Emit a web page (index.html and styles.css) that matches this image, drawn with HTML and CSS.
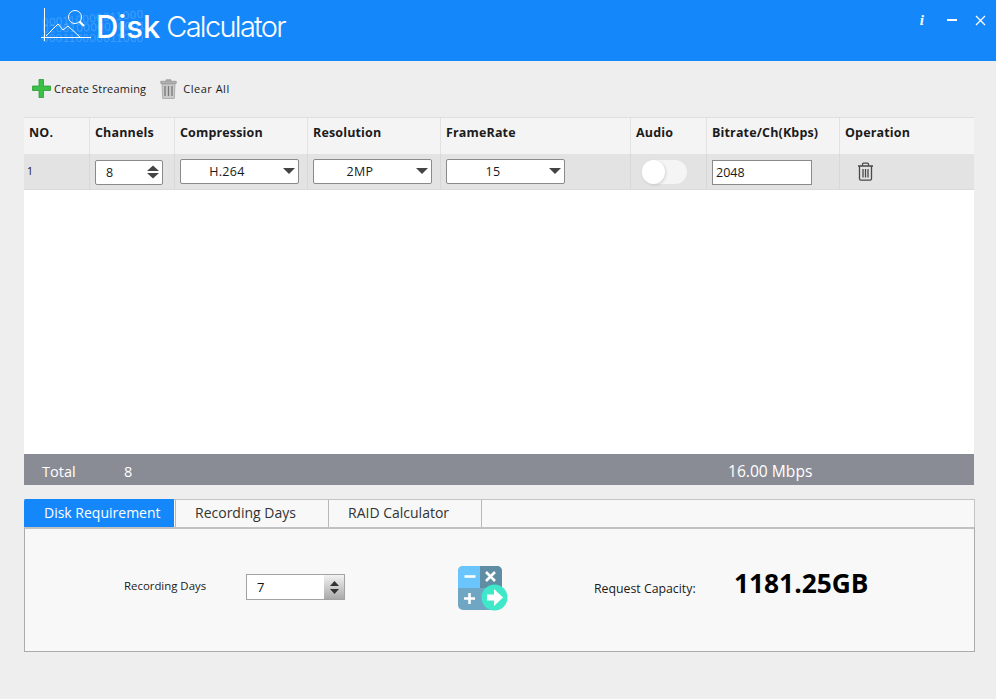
FILE: index.html
```html
<!DOCTYPE html>
<html lang="en">
<head>
<meta charset="utf-8">
<title>Disk Calculator</title>
<link rel="stylesheet" href="styles.css">
</head>
<body>
<header class="titlebar">
  <div class="logo">
    <div class="logo-art">
      <div class="binary"><span>000110000011000</span><span>020010000010001</span><span>000110000011000</span></div>
      <svg class="chart" width="52" height="34" viewBox="0 0 52 34" fill="none" stroke="#fff">
        <path d="M3.500 0v33M0 29.500h50" stroke-width="1"/>
        <path d="M5 28l12-12 5 6 5-4 12 11" stroke-width="1"/>
        <circle cx="34" cy="9" r="6.500" stroke-width="1"/>
        <path d="M38.500 13.500l4.500 4.500" stroke-width="2.200"/>
      </svg>
    </div>
    <span class="logo-bold">Disk</span><span class="logo-light">Calculator</span>
  </div>
  <div class="window-controls">
    <span class="win-info">i</span>
    <svg width="11" height="3" viewBox="0 0 11 3"><rect width="10" height="2" fill="#fff"/></svg>
    <svg width="11" height="11" viewBox="0 0 11 11" fill="none" stroke="#fff" stroke-width="1.300"><path d="M1 1l9 9M10 1l-9 9"/></svg>
  </div>
</header>

<main class="content">
  <div class="toolbar">
    <button class="tool tool-create">
      <svg width="19" height="19" viewBox="0 0 19 19"><path d="M7 0.500h4.500V7H18.500v4.500H11.500V18.500H7V11.500H0.500V7H7z" fill="#3bbf45" stroke="#2a9c36" stroke-width="0.800"/></svg>
      Create Streaming
    </button>
    <button class="tool tool-clear">
      <svg width="17" height="20" viewBox="0 0 17 20">
        <path d="M6 2V.8h5V2M.8 2.300h15.400v2.200H.8z" fill="#b0b0b0" stroke="#989898" stroke-width=".8"/>
        <path d="M2 5h13l-.7 14.500H2.700z" fill="#cacaca" stroke="#a2a2a2" stroke-width=".8"/>
        <path d="M5 7v10M8.500 7v10M12 7v10" stroke="#777" stroke-width="1.300"/>
      </svg>
      Clear All
    </button>
  </div>

  <section class="table">
    <div class="row row-head">
      <div class="cell">NO.</div>
      <div class="cell">Channels</div>
      <div class="cell">Compression</div>
      <div class="cell">Resolution</div>
      <div class="cell">FrameRate</div>
      <div class="cell">Audio</div>
      <div class="cell">Bitrate/Ch(Kbps)</div>
      <div class="cell">Operation</div>
    </div>
    <div class="row row-body">
      <div class="cell cell-no">1</div>
      <div class="cell">
        <div class="field spin"><span>8</span>
          <svg width="12" height="14" viewBox="0 0 13 14" fill="#444"><path d="M6.500 0L13 6H0zM6.500 14L0 8h13z"/></svg>
        </div>
      </div>
      <div class="cell"><div class="field select"><span>H.264</span><i class="caret"></i></div></div>
      <div class="cell"><div class="field select"><span>2MP</span><i class="caret"></i></div></div>
      <div class="cell"><div class="field select"><span>15</span><i class="caret"></i></div></div>
      <div class="cell cell-toggle"><div class="toggle"><i></i></div></div>
      <div class="cell"><div class="field text">2048</div></div>
      <div class="cell cell-op">
        <svg width="17" height="19" viewBox="0 0 17 19" fill="none" stroke="#4a4a4a" stroke-width="1.300">
          <path d="M1 4h15M5.500 4V2.200q0-1 1-1h4q1 0 1 1V4M2.500 4.500v12.300q0 1.400 1.400 1.400h9.200q1.400 0 1.400-1.400V4.500"/>
          <path d="M6 7v8.500M8.500 7v8.500M11 7v8.500"/>
        </svg>
      </div>
    </div>
    <div class="table-empty"></div>
    <div class="total">
      <span class="total-label">Total</span>
      <span class="total-channels">8</span>
      <span class="total-rate">16.00 Mbps</span>
    </div>
  </section>

  <nav class="tabs">
    <div class="tab tab-active">Disk Requirement</div>
    <div class="tab">Recording Days</div>
    <div class="tab">RAID Calculator</div>
  </nav>
  <section class="panel">
    <span class="label label-days">Recording Days</span>
    <div class="days-spin">
      <span class="days-value">7</span>
      <span class="days-btn">
        <svg width="9" height="13" viewBox="0 0 9 13" fill="#333"><path d="M4.500 0L9 5H0zM4.500 13L0 8h9z"/></svg>
      </span>
    </div>
    <svg class="calc" width="52" height="46" viewBox="0 0 52 46">
      <rect x="1" y="1" width="44" height="44" rx="5" fill="#6fa6c4"/>
      <path d="M23 1H6a5 5 0 0 0-5 5v17h22z" fill="#69c5fb"/>
      <path d="M23 1h17a5 5 0 0 1 5 5v17H23z" fill="#5f8da3"/>
      <path d="M7.500 11.500h11" stroke="#fff" stroke-width="2.600"/>
      <path d="M29 7l9 9M38 7l-9 9" stroke="#fff" stroke-width="2.600"/>
      <path d="M7 33.500h11M12.500 28v11" stroke="#fff" stroke-width="2.600"/>
      <circle cx="37.500" cy="32.500" r="13" fill="#3fe8c8"/>
      <path d="M30 29.500h7V24l9 8.500-9 8.500v-5.500h-7z" fill="#fff"/>
    </svg>
    <span class="label label-capacity">Request Capacity:</span>
    <span class="capacity">1181.25GB</span>
  </section>
</main>
</body>
</html>
```

FILE: styles.css
```css
* { box-sizing: border-box; }
html, body { margin: 0; padding: 0; }
body {
  width: 996px;
  height: 699px;
  overflow: hidden;
  background: #eeeeee;
  font-family: "Open Sans", "Noto Sans", sans-serif;
  color: #111;
}

.titlebar {
  height: 61px;
  background: #1488fb;
  display: flex;
  justify-content: space-between;
  padding: 8px 10px 0 41px;
}
.logo { display: flex; align-items: flex-start; position: relative; color: #fff; height: 44px; }
.logo-art { width: 55px; height: 44px; position: relative; }
.chart { position: absolute; left: 0; top: 0; }
.binary {
  position: absolute;
  left: 1px;
  top: 5px;
  width: 106px;
  display: flex;
  flex-direction: column;
  font: 11.500px/11px "Liberation Sans", sans-serif;
  letter-spacing: .5px;
  white-space: nowrap;
  color: rgba(255,255,255,.2);
}
.binary span { display: block; }
.binary span:nth-child(1) { transform: rotate(-5deg); }
.binary span:nth-child(2) { transform: rotate(-2deg); margin-top: -2px; }
.logo-bold {
  font: 500 31px/38px Inter, sans-serif;
  position: relative;
}
.logo-light {
  font: 300 29px/38px Inter, sans-serif;
  letter-spacing: -1.700px;
  margin-left: 6px;
  position: relative;
}
.window-controls { display: flex; align-items: center; gap: 17px; height: 24px; }
.win-info { font: italic 700 15px/1 "Liberation Serif", serif; color: #fff; margin-right: 6px; }

.content { padding: 0 21px 0 24px; }
.toolbar { height: 56px; display: flex; align-items: center; padding: 0 0 1px 8px; gap: 14px; }
.tool {
  display: flex;
  align-items: center;
  gap: 3px;
  border: 0;
  padding: 0;
  background: none;
  color: #1a1a1a;
  font: 11px "Open Sans", sans-serif;
  letter-spacing: .2px;
}
.tool-clear { gap: 6px; letter-spacing: .5px; }

.table { width: 950px; background: #fff; }
.row {
  display: grid;
  grid-template-columns: 66px 85px 133px 133px 190px 76px 133px 134px;
}
.row-head { height: 37px; background: #f4f4f4; border-top: 1px solid #dfdfdf; }
.row-head .cell { font-weight: 700; font-size: 12.500px; letter-spacing: .15px; line-height: 29px; padding: 0 5px; color: #1b1b1b; }
.row-body { height: 36px; background: #e3e3e3; border-bottom: 1px solid #dadada; }
.row-body .cell { display: flex; align-items: center; padding: 0 5px; }
.cell { border-right: 1px solid #e2e2e2; }
.row-body .cell { border-right-color: #d8d8d8; }
.cell:last-child { border-right: 0; }
.row-body .cell-no { font-size: 10.500px; padding: 0 0 2px 3px; }
.row-body .cell-toggle { justify-content: flex-start; padding-left: 11px; }
.row-body .cell-op { padding-left: 17px; }

.field {
  height: 25px;
  background: #fff;
  border: 1px solid #8a8a8a;
  border-radius: 2px;
  font-size: 12.500px;
  color: #1a1a1a;
  display: flex;
  align-items: center;
}
.spin { width: 68px; justify-content: space-between; padding: 0 3px 0 10px; margin-top: 1px; }
.select { width: 119px; position: relative; justify-content: center; padding-right: 25px; letter-spacing: .3px; }
.caret {
  position: absolute;
  right: 3px;
  top: 8px;
  width: 0;
  height: 0;
  border: 6px solid transparent;
  border-top: 6px solid #444;
  border-bottom: 0;
}
.text { width: 100px; padding-left: 3px; border-radius: 0; margin-top: 1px; }
.toggle {
  width: 45px;
  height: 24px;
  border-radius: 12px;
  background: #f5f5f5;
  position: relative;
}
.toggle i {
  position: absolute;
  left: 0;
  top: 0;
  width: 23px;
  height: 24px;
  border-radius: 50%;
  background: #fff;
  box-shadow: 1px 1px 3px rgba(0,0,0,.14);
}

.table-empty { height: 264px; background: #fff; }
.total {
  height: 31px;
  background: #8a8c95;
  color: #fff;
  display: flex;
  align-items: center;
  font-size: 14.500px;
  padding: 3px 0 0 18px;
}
.total-label { width: 82px; }
.total-channels { width: 604px; }
.total-rate { font-size: 15.600px; }

.tabs {
  margin-top: 14px;
  width: 951px;
  height: 28px;
  display: flex;
  background: #f8f8f8;
  border-top: 1px solid #c4c4c4;
  border-right: 1px solid #c4c4c4;
}
.tab {
  width: 154px;
  background: #f8f8f8;
  border-right: 1px solid #b8b8b8;
  border-left: 1px solid #b8b8b8;
  margin-top: -1px;
  border-top: 1px solid #c4c4c4;
  font-size: 14px;
  line-height: 26px;
  padding-left: 19px;
  color: #333;
  margin-left: -1px;
}
.tab-active {
  width: 150px;
  margin-left: 0;
  padding-left: 20px;
  background: #1488fb;
  color: #fff;
  border: 0;
  border-radius: 2px 0 0 0;
  line-height: 27px;
  margin-right: 2px;
}
.panel {
  width: 951px;
  height: 125px;
  background: #f8f8f8;
  border: 1px solid #ababab;
  border-top: 2px solid #c2c2c2;
  display: flex;
  align-items: flex-start;
}
.label { font-size: 11.400px; color: #1a1a1a; }
.label-days { margin: 49px 0 0 99px; width: 122px; }
.days-spin {
  margin-top: 45px;
  width: 99px;
  height: 26px;
  border: 1px solid #a3a3a3;
  background: #fff;
  display: flex;
  justify-content: space-between;
}
.days-value { font-size: 13px; line-height: 24px; padding-left: 10px; }
.days-btn {
  width: 20px;
  background: linear-gradient(#f2f2f2, #a9a9a9);
  display: flex;
  align-items: center;
  justify-content: center;
}
.calc { margin: 36px 0 0 112px; }
.label-capacity { margin: 51px 0 0 85px; width: 140px; font-size: 12.300px; }
.capacity { font-weight: 700; font-size: 26.300px; line-height: 34px; margin-top: 37px; color: #000; }
```
